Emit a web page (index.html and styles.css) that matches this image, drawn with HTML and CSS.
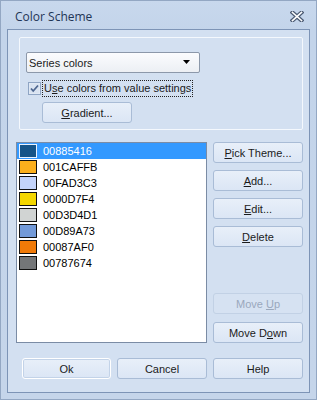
FILE: index.html
```html
<html>
<head>
    <title>Color Scheme</title>
<link rel="stylesheet" href="styles.css">
</head>
<body>
<div class="window">
    <div class="titlebar">
        <span class="caption">Color Scheme</span>
        <svg class="closeBtn" width="14" height="11" viewBox="0 0 14 11">
            <path d="M2.5 1.5 L11.5 9.5 M11.5 1.5 L2.5 9.5" stroke="#4b5a73" stroke-width="4" stroke-linecap="square"/>
            <path d="M2.5 1.5 L11.5 9.5 M11.5 1.5 L2.5 9.5" stroke="#ffffff" stroke-width="1.6" stroke-linecap="square"/>
        </svg>
    </div>
    <div class="client">
        <div class="groupBox">
            <div class="combo">
                <span>Series colors</span>
                <svg width="8" height="5" viewBox="0 0 8 5"><path d="M0 0 H7 L3.5 4 Z" fill="#000"/></svg>
            </div>
            <div class="checkRow">
                <svg class="checkBox" width="13" height="13" viewBox="0 0 13 13">
                    <rect x="0.5" y="0.5" width="12" height="12" fill="#e4ecf7" stroke="#8fa5c4"/>
                    <rect x="1.5" y="1.5" width="10" height="10" fill="#d9e3f1"/>
                    <path d="M3 6.5 L5.2 9 L10 3.5" stroke="#4d6690" stroke-width="1.8" fill="none"/>
                </svg>
                <span class="checkLabel">U<u>s</u>e colors from value settings</span>
            </div>
            <div class="btn gradBtn"><span><u>G</u>radient...</span></div>
        </div>
        <div class="middle">
            <ul class="listBox">
                <li class="selected"><span class="swatch" style="background:#165488"></span>00885416</li>
                <li><span class="swatch" style="background:#fbaf1c"></span>001CAFFB</li>
                <li><span class="swatch" style="background:#c3d3fa"></span>00FAD3C3</li>
                <li><span class="swatch" style="background:#f4d700"></span>0000D7F4</li>
                <li><span class="swatch" style="background:#d1d4d3"></span>00D3D4D1</li>
                <li><span class="swatch" style="background:#739ad8"></span>00D89A73</li>
                <li><span class="swatch" style="background:#f07a08"></span>00087AF0</li>
                <li><span class="swatch" style="background:#747678"></span>00787674</li>
            </ul>
            <div class="sideButtons">
                <div class="btnGroup">
                    <div class="btn"><span><u>P</u>ick Theme...</span></div>
                    <div class="btn"><span><u>A</u>dd...</span></div>
                    <div class="btn"><span><u>E</u>dit...</span></div>
                    <div class="btn"><span><u>D</u>elete</span></div>
                </div>
                <div class="btnGroup moveGroup">
                    <div class="btn disabled"><span>Move <u>U</u>p</span></div>
                    <div class="btn"><span>Move D<u>o</u>wn</span></div>
                </div>
            </div>
        </div>
        <div class="bottomRow">
            <div class="btn okBtn"><span>Ok</span></div>
            <div class="btn"><span>Cancel</span></div>
            <div class="btn"><span>Help</span></div>
        </div>
    </div>
</div>
</body>
</html>
```

FILE: styles.css
```css
body {
    margin: 0;
    padding: 0;
    background: #ffffff;
    font-family: "Liberation Sans", Arial, sans-serif;
    font-size: 11px;
    color: #1b1b1b;
}
.window {
    width: 317px;
    height: 400px;
    box-sizing: border-box;
    border: 1px solid #93a7c3;
    background: linear-gradient(#c8d8ed, #c3d4ea 30px, #c5d5ea);
    padding: 0 6px 6px 6px;
    display: flex;
    flex-direction: column;
}
.titlebar {
    height: 28px;
    display: flex;
    align-items: center;
    justify-content: space-between;
    padding: 0 6px 0 8px;
}
.caption {
    font-family: "Open Sans", sans-serif;
    font-size: 12px;
    color: #1f3556;
    margin-top: 2px;
}
.closeBtn {
    margin-top: 3px;
}
.client {
    flex: 1;
    border: 1px solid #7d94b6;
    background: #d3e0f1;
    display: flex;
    flex-direction: column;
}
.groupBox {
    margin: 7px 6px 0 11px;
    height: 93px;
    box-sizing: border-box;
    border: 1px solid #f4f8fd;
    border-radius: 2px;
    padding: 14px 0 0 6px;
}
.combo {
    width: 174px;
    height: 21px;
    box-sizing: border-box;
    border: 1px solid #8c98aa;
    border-radius: 2px;
    background: linear-gradient(#fbfcfe, #eceff4);
    display: flex;
    align-items: center;
    justify-content: space-between;
    padding: 0 8px 0 2px;
}
.checkRow {
    margin-top: 7px;
    height: 16px;
    display: flex;
    align-items: center;
}
.checkBox {
    margin-left: 2px;
    margin-right: 1px;
}
.checkLabel {
    border: 1px dotted #222;
    padding: 1px;
    line-height: 13px;
}
.btn {
    width: 90px;
    height: 21px;
    box-sizing: border-box;
    border: 1px solid #a9bcd6;
    border-radius: 3px;
    background: linear-gradient(#e8eff9, #dbe6f5);
    display: flex;
    align-items: center;
    justify-content: center;
    color: #1b1b1b;
}
.gradBtn {
    margin: 6px 0 0 16px;
}
.disabled {
    color: #9aa8bd;
    border-color: #c2d1e5;
    background: #d6e2f2;
}
.okBtn {
    width: 89px;
    border-color: #ffffff;
    box-shadow: inset 0 0 0 1px #c3d3e8;
}
.middle {
    margin: 12px 6px 0 8px;
    display: flex;
    gap: 6px;
}
.listBox {
    width: 191px;
    height: 201px;
    box-sizing: border-box;
    margin: 0;
    padding: 0;
    list-style: none;
    background: #ffffff;
    border: 1px solid #7b8ca5;
}
.listBox li {
    height: 16px;
    display: flex;
    align-items: center;
    color: #000;
}
.listBox li.selected {
    background: #3399ff;
    color: #ffffff;
}
.swatch {
    width: 18px;
    height: 14px;
    box-sizing: border-box;
    border: 1px solid #111;
    margin: 0 6px 0 2px;
}
.selected .swatch {
    border-color: #e9f2ff;
}
.sideButtons {
    display: flex;
    flex-direction: column;
    justify-content: space-between;
}
.btnGroup {
    display: flex;
    flex-direction: column;
    gap: 7px;
}
.moveGroup {
    gap: 8px;
}
.bottomRow {
    margin: 15px 0 0 14px;
    display: flex;
    gap: 6px;
}
```
